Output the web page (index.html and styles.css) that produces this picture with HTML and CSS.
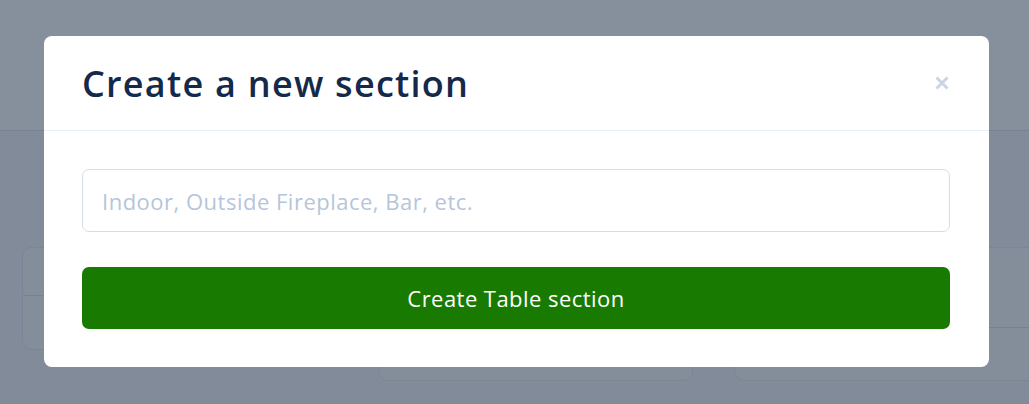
FILE: index.html
```html
<!DOCTYPE html>
<html>
<head>
<meta charset="utf-8">
<link rel="stylesheet" href="styles.css">
</head>
<body>
<div class="page">
  <div class="page-header"></div>
  <div class="page-cards">
    <div class="bg-card bg-card-a"><div class="bg-divider"></div></div>
    <div class="bg-card bg-card-b"></div>
    <div class="bg-card bg-card-c"><div class="bg-divider-c"></div></div>
  </div>
</div>
<div class="overlay">
  <div class="modal">
    <div class="modal-header">
      <h1 class="modal-title">Create a new section</h1>
      <button class="modal-close" aria-label="Close">
        <svg width="14" height="14" viewBox="0 0 14 14"><path d="M1.5 1.5 L12.5 12.5 M12.5 1.5 L1.5 12.5" stroke="#c9d5e4" stroke-width="3"/></svg>
      </button>
    </div>
    <div class="modal-body">
      <input class="field" type="text" placeholder="Indoor, Outside Fireplace, Bar, etc.">
      <button class="primary">Create Table section</button>
    </div>
  </div>
</div>
</body>
</html>
```

FILE: styles.css
```css
* { box-sizing: border-box; }
html, body { margin: 0; padding: 0; }
body {
  width: 1029px;
  height: 404px;
  overflow: hidden;
  font-family: "Open Sans", "Lato", sans-serif;
  background: #f4f6f9;
  position: relative;
}
.page { width: 100%; height: 100%; }
.page-header {
  height: 131px;
  border-bottom: 1px solid #dfe6ef;
  background: #ffffff;
}
.page-cards {
  display: flex;
  gap: 36px;
  padding: 116px 0 0 22px;
}
.bg-card {
  flex-shrink: 0;
  background: #fbfcfd;
  border: 1px solid #e6ebf1;
  border-radius: 10px;
}
.bg-card-a { width: 320px; height: 103px; }
.bg-divider { margin-top: 47px; border-top: 1px solid #dde3ea; }
.bg-card-b { width: 315px; height: 134px; }
.bg-card-c { width: 320px; height: 134px; margin-left: 5px; }
.bg-divider-c { margin-top: 79px; border-top: 1px solid #dde3ea; }

.overlay {
  position: absolute;
  inset: 0;
  background: rgba(26, 44, 68, 0.53);
  padding: 36px 40px 0 44px;
}
.modal {
  width: 945px;
  height: 331px;
  background: #ffffff;
  border-radius: 8px;
  overflow: hidden;
}
.modal-header {
  height: 95px;
  border-bottom: 1px solid #e9eff6;
  display: flex;
  align-items: center;
  justify-content: space-between;
  padding: 0 39px 0 38px;
}
.modal-title {
  margin: 0;
  font-family: "Open Sans", "Lato", sans-serif;
  font-weight: 600;
  font-size: 36px;
  letter-spacing: 1.25px;
  color: #15294a;
}
.modal-close {
  border: 0;
  background: none;
  padding: 0;
  width: 16px;
  height: 16px;
  display: flex;
  align-items: center;
  justify-content: center;
}
.modal-body {
  padding: 38px 38px 0 38px;
  display: flex;
  flex-direction: column;
  gap: 35px;
}
.field {
  width: 868px;
  height: 63px;
  border: 1px solid #d3deea;
  border-radius: 7px;
  padding: 0 19px;
  font-family: "Open Sans", sans-serif;
  font-size: 22px;
  letter-spacing: 0.5px;
  color: #15294a;
  outline: none;
}
.field::placeholder { color: #b6c5da; }
.primary {
  width: 868px;
  height: 62px;
  border: 0;
  border-radius: 7px;
  background: #187a00;
  color: #ffffff;
  font-family: "Open Sans", sans-serif;
  font-size: 22px;
  letter-spacing: 0.45px;
}
```
